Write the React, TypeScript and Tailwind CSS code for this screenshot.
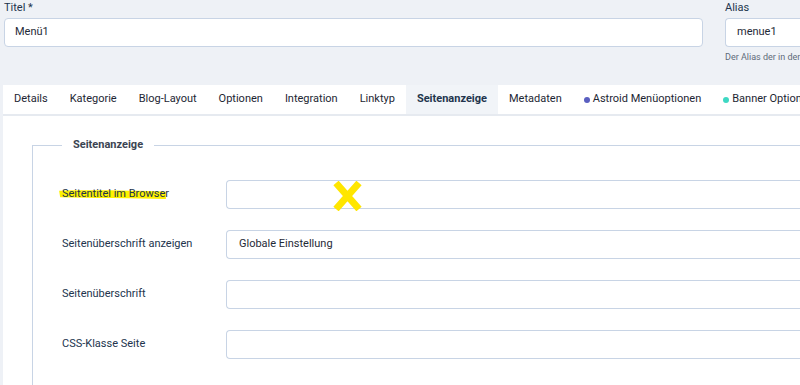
import React from 'react';

const tabs = [
  { label: 'Details' },
  { label: 'Kategorie' },
  { label: 'Blog-Layout' },
  { label: 'Optionen' },
  { label: 'Integration' },
  { label: 'Linktyp' },
  { label: 'Seitenanzeige', active: true },
  { label: 'Metadaten' },
  { label: 'Astroid Menüoptionen', dot: 'bg-[#5a5fc0]' },
  { label: 'Banner Optionen', dot: 'bg-[#3ed8c3]' },
];

function Field({ label, value, highlight, mark }: { label: string; value?: string; highlight?: boolean; mark?: boolean }) {
  return (
    <div className="flex items-center h-[29px]">
      <div className="w-[164px] shrink-0 text-[11px] text-[#22344d]">
        {highlight ? (
          <span className="relative inline-block">
            <svg className="absolute left-[-4px] top-[1px] w-[calc(100%+2px)] h-[13px]" viewBox="0 0 100 14" preserveAspectRatio="none">
              <path d="M1 4 C30 3, 70 4, 99 5 L99 13 C70 12, 30 12, 2 11 Z" fill="#fff200" />
            </svg>
            <span className="relative">{label}</span>
          </span>
        ) : (
          label
        )}
      </div>
      <div className="relative flex-1 h-[29px] bg-white border border-[#c8d4e5] rounded-l-[4px] border-r-0 flex items-center pl-[12px] text-[11px] text-[#1f2a37]">
        {value}
        {mark && (
          <svg className="absolute left-[106px] top-[0px]" width="29" height="30" viewBox="0 0 29 30">
            <path d="M3 2 L26 28 M26 2 L3 28" stroke="#ffe600" strokeWidth="7" />
          </svg>
        )}
      </div>
    </div>
  );
}

export default function App() {
  return (
    <div className="w-[800px] h-[385px] overflow-hidden bg-[#eef1f6]" style={{ fontFamily: 'Roboto, "Liberation Sans", sans-serif' }}>
      {/* Titel + Alias */}
      <div className="flex pl-[4px] pt-[1px]">
        <div className="w-[699px] shrink-0">
          <div className="text-[11px] leading-[14px] text-[#22344d] mb-[3px]">Titel *</div>
          <div className="h-[29px] bg-white border border-[#c8d4e5] rounded-[4px] flex items-center pl-[10px] text-[11px] text-[#1f2a37]">Menü1</div>
        </div>
        <div className="ml-[22px] flex-1 min-w-0">
          <div className="text-[11px] leading-[14px] text-[#22344d] mb-[3px]">Alias</div>
          <div className="h-[29px] bg-white border border-[#c8d4e5] border-r-0 rounded-l-[4px] flex items-center pl-[11px] text-[11px] text-[#1f2a37]">menue1</div>
          <div className="mt-[4px] text-[9px] leading-[12px] text-[#5f6b7a] whitespace-nowrap">Der Alias der in der URL</div>
        </div>
      </div>

      {/* Tabs + content */}
      <div className="ml-[3px] mt-[22px] bg-white h-[310px]">
        <div className="flex h-[31px] border-b-2 border-[#e6eaf0] whitespace-nowrap overflow-hidden">
          {tabs.map((t) => (
            <div
              key={t.label}
              className={`flex items-center px-[11px] text-[11px] -mb-[2px] border-b-2 ${
                t.active ? 'bg-[#f1f4f8] border-[#4f72a6] font-bold text-[#22344d]' : 'border-transparent text-[#1d2633]'
              }`}
            >
              {t.dot && <span className={`w-[6px] h-[6px] rounded-full mr-[3px] ${t.dot}`} />}
              {t.label}
            </div>
          ))}
        </div>

        <fieldset className="ml-[29px] mt-[21px] border-l border-t border-[#c8d4e5] pl-[29px] h-[300px]">
          <legend className="px-[11px] text-[11px] font-bold text-[#3b4452] leading-[16px]">Seitenanzeige</legend>
          <div className="mt-[27px] flex flex-col gap-[21px]">
            <Field label="Seitentitel im Browser" highlight mark />
            <Field label="Seitenüberschrift anzeigen" value="Globale Einstellung" />
            <Field label="Seitenüberschrift" />
            <Field label="CSS-Klasse Seite" />
          </div>
        </fieldset>
      </div>
    </div>
  );
}
